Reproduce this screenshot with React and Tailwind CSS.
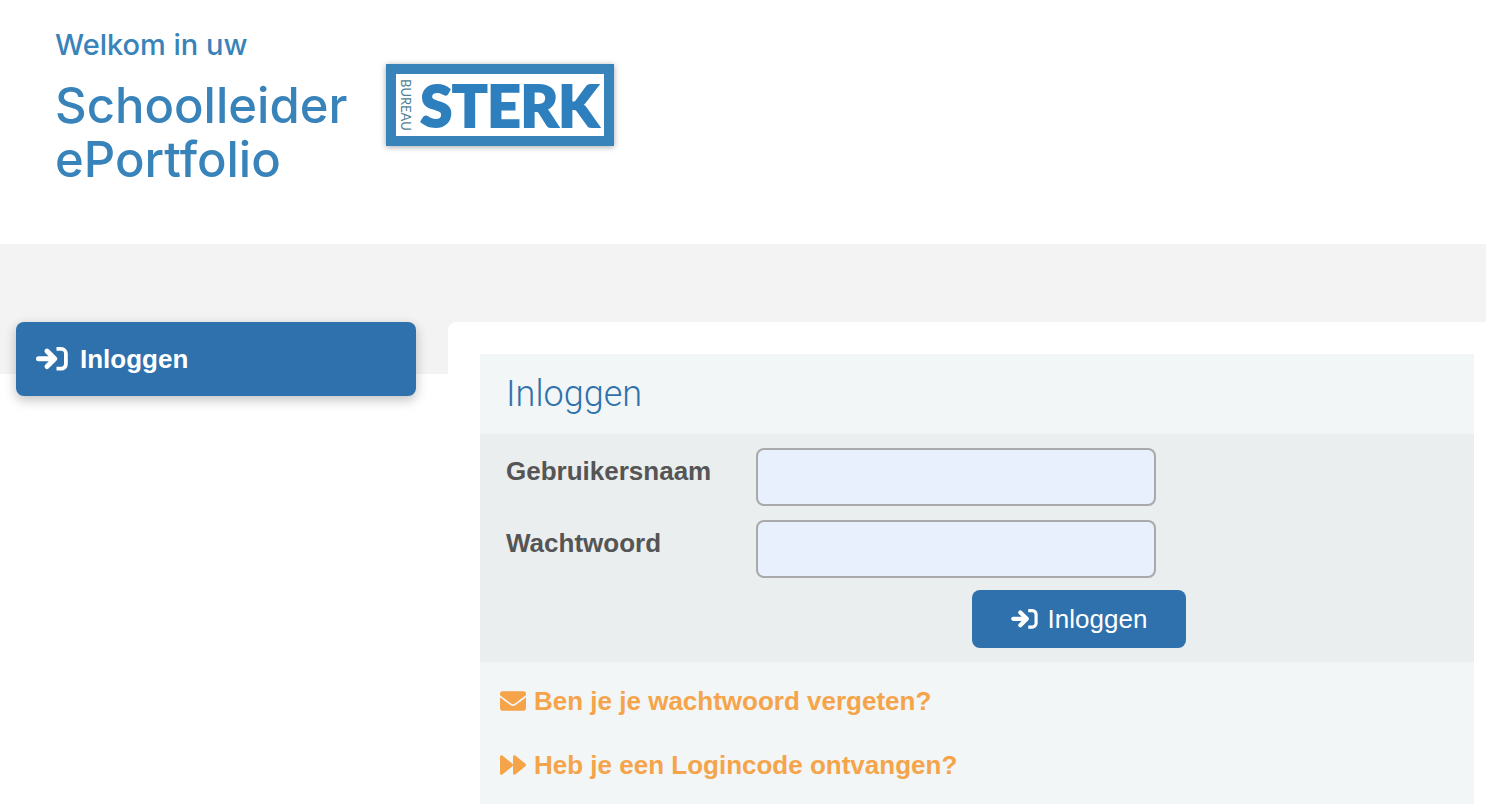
import React, { useState } from 'react';
import { FaEnvelope, FaForward } from 'react-icons/fa';

function LoginIcon({ className }) {
    return (
        <svg viewBox="0 0 32 24" fill="none" stroke="currentColor" strokeLinecap="round" strokeLinejoin="round" className={className} aria-hidden="true">
            <path strokeWidth="5" d="M2.5 11.8h16M11 4.1l7.8 7.7L11 19.5" />
            <path strokeWidth="3.8" strokeLinecap="butt" d="M20.5 1.9h4.7a4.7 4.7 0 0 1 4.7 4.7v10.4a4.7 4.7 0 0 1-4.7 4.7h-4.7" />
        </svg>
    );
}

function Logo() {
    return (
        <div className="flex h-[82px] w-[228px] items-center justify-between border-10 border-[#3883ba] bg-white pl-1 pr-[6px] shadow-[0_1px_6px_rgba(0,0,0,0.35)]">
            <span className="font-['Lato',sans-serif] text-[13px] leading-3 text-[#4f7f92] [writing-mode:vertical-rl]">BUREAU</span>
            <span className="font-['Lato',sans-serif] text-[58px] font-black leading-[62px] text-[#2e7fbd] [-webkit-text-stroke:2px_#2e7fbd]">STERK</span>
        </div>
    );
}

function Field({ id, label, type, value, onChange }) {
    return (
        <div className="flex items-start">
            <label htmlFor={id} className="w-[250px] shrink-0 pt-[7px] font-bold leading-8 text-[#555]">{label}</label>
            <input
                id={id}
                type={type}
                value={value}
                onChange={(e) => onChange(e.target.value)}
                className="h-[58px] w-[400px] min-w-0 rounded-lg border-2 border-[#a9a9a9] bg-[#e8effd] px-3 text-[#333] focus:border-[#2f71ac] focus:outline-none"
            />
        </div>
    );
}

export default function App() {
    const [username, setUsername] = useState("");
    const [password, setPassword] = useState("");

    return (
        <div className="bg-white font-['Liberation_Sans',Arial,sans-serif] text-[26px]">
            <header className="flex h-[244px] items-start gap-[39px] pl-[55px]">
                <h1 className="pt-7 font-['Inter',sans-serif] font-medium text-[#3883ba]">
                    <span className="block text-[29px] leading-[34px]">Welkom in uw</span>
                    <span className="block pt-[17px] text-[49px] leading-[54px]">Schoolleider<br />ePortfolio</span>
                </h1>
                <div className="pt-16">
                    <Logo />
                </div>
            </header>

            {/* Grey band behind the top of the columns */}
            <div className="h-[130px] bg-[#f3f3f3]" />

            <div className="-mt-[52px] flex items-start gap-8 pl-4">
                <nav className="w-[400px] shrink-0">
                    <a href="#login" className="flex h-[74px] items-center gap-3 rounded-lg bg-[#2f71ac] px-5 font-bold text-white shadow-[0_4px_12px_rgba(0,0,0,0.25)]">
                        <LoginIcon className="h-6 w-8" />
                        Inloggen
                    </a>
                </nav>

                <main className="min-w-0 flex-1 rounded-tl-lg bg-white pb-2 pl-8 pr-3 pt-8">
                    <section className="bg-[#f2f6f7]">
                        <h2 className="flex h-20 items-center px-[26px] font-['Roboto',sans-serif] text-[36px] font-light text-[#2f71ac]">
                            Inloggen
                        </h2>

                        <form onSubmit={(e) => e.preventDefault()} className="bg-[#eaeeef] px-[26px] py-[14px]">
                            <div className="flex max-w-[680px] flex-col gap-[14px]">
                                <Field id="username" label="Gebruikersnaam" type="text" value={username} onChange={setUsername} />
                                <Field id="password" label="Wachtwoord" type="password" value={password} onChange={setPassword} />
                            </div>
                            <div className="flex max-w-[680px] justify-end pt-3">
                                <button type="submit" className="flex h-[58px] w-[214px] items-center justify-center gap-[10px] rounded-lg bg-[#2f71ac] text-white">
                                    <LoginIcon className="h-5 w-[27px]" />
                                    Inloggen
                                </button>
                            </div>
                        </form>

                        <div className="flex flex-col items-start gap-8 px-5 py-[23px] font-bold leading-8 text-[#f5a44a]">
                            <a href="#forgot" className="flex items-center gap-2">
                                <FaEnvelope />
                                Ben je je wachtwoord vergeten?
                            </a>
                            <a href="#logincode" className="flex items-center gap-2">
                                <FaForward />
                                Heb je een Logincode ontvangen?
                            </a>
                        </div>
                    </section>
                </main>
            </div>
        </div>
    );
}
